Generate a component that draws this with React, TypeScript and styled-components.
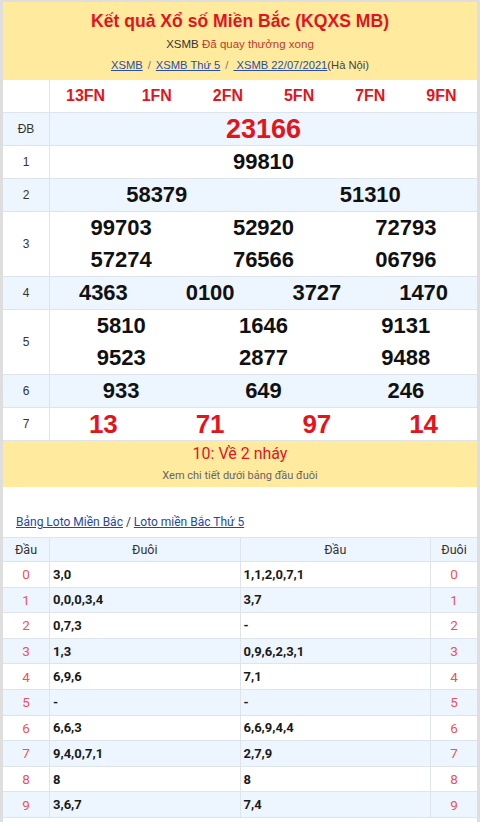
import React from "react";
import styled, { createGlobalStyle } from "styled-components";

const Global = createGlobalStyle`
  html, body { margin: 0; padding: 0; background: #fff; }
  body { font-family: "Liberation Sans", Arial, sans-serif; }
  * { box-sizing: border-box; }
`;

const Frame = styled.div`
  width: 480px;
  min-height: 822px;
  border-top: 2px solid #dedede;
  border-left: 3px solid #dedede;
  border-right: 3px solid #dedede;
  background: #fff;
`;

const Header = styled.div`
  background: #ffea9e;
  text-align: center;
  padding: 6px 0 5px;
`;

const Title = styled.h1`
  margin: 0;
  font-family: "Liberation Sans", Arial, sans-serif;
  font-weight: 700;
  font-size: 17.6px;
  line-height: 26px;
  color: #e4141c;
`;

const Sub = styled.div`
  font-size: 11.5px;
  line-height: 20px;
  color: #333;
`;

const SubRed = styled.span`
  color: #c0392b;
`;

const Crumbs = styled.div`
  margin-top: 1px;
  font-size: 11.2px;
  line-height: 20px;
  color: #444;
`;

const CrumbLink = styled.a`
  color: #2b4ea6;
  text-decoration: underline;
`;

const Sep = styled.span`
  color: #777;
  margin: 0 5px;
`;

const Row = styled.div<{ $alt?: boolean; $h: number }>`
  display: flex;
  height: ${(p) => p.$h}px;
  background: ${(p) => (p.$alt ? "#edf5fe" : "#fff")};
  border-bottom: 1px solid #dfe4ea;
`;

const Label = styled.div`
  width: 47px;
  flex: none;
  border-right: 1px solid #dfe4ea;
  display: flex;
  align-items: center;
  justify-content: center;
  font-size: 12px;
  color: #333;
`;

const Cells = styled.div<{ $cols: number }>`
  flex: 1;
  display: grid;
  grid-template-columns: repeat(${(p) => p.$cols}, 1fr);
  align-content: center;
`;

const Num = styled.div<{ $red?: boolean; $size?: number; $lh?: number }>`
  text-align: center;
  font-family: "Liberation Sans", Arial, sans-serif;
  font-weight: 700;
  font-size: ${(p) => p.$size ?? 22}px;
  line-height: ${(p) => p.$lh ?? 32}px;
  color: ${(p) => (p.$red ? "#e4141c" : "#111")};
`;

const Notice = styled.div`
  background: #ffea9e;
  text-align: center;
  padding: 1px 0 1px;
  font-family: Roboto, "Liberation Sans", sans-serif;
`;

const NoticeMain = styled.div`
  font-size: 16px;
  line-height: 24px;
  color: #e4141c;
`;

const NoticeSub = styled.div`
  font-size: 11px;
  line-height: 20px;
  color: #666;
`;

const LotoSection = styled.div`
  padding-top: 26px;
  font-family: Roboto, "Liberation Sans", sans-serif;
`;

const LotoLinks = styled.div`
  padding-left: 13px;
  font-size: 12px;
  line-height: 18px;
  margin-bottom: 6px;
  color: #333;
`;

const LotoLink = styled.a`
  color: #2446a8;
  text-decoration: underline;
`;

const LotoGrid = styled.div`
  display: grid;
  grid-template-columns: 47px 1fr 1fr 46px;
  border-top: 1px solid #dfe4ea;
`;

const LCell = styled.div<{ $alt?: boolean; $head?: boolean; $kind: "key" | "val" }>`
  height: ${(p) => (p.$head ? 24 : 25.6)}px;
  display: flex;
  align-items: center;
  justify-content: ${(p) => (p.$kind === "key" || p.$head ? "center" : "flex-start")};
  padding-left: ${(p) => (p.$kind === "val" && !p.$head ? 3 : 0)}px;
  background: ${(p) => (p.$alt ? "#edf5fe" : "#fff")};
  border-bottom: 1px solid #dfe4ea;
  border-right: 1px solid #dfe4ea;
  &:nth-child(4n) { border-right: none; }
  font-size: ${(p) => (p.$head ? 12.5 : p.$kind === "key" ? 13.5 : 13)}px;
  font-weight: ${(p) => (p.$kind === "val" && !p.$head ? 700 : 400)};
  color: ${(p) => (p.$head ? "#333" : p.$kind === "key" ? "#f0505a" : "#1a1a1a")};
`;

type Prize = { label: string; cols: number; nums: string[]; red?: boolean; size?: number; lines?: number };

const prizes: Prize[] = [
  { label: "ĐB", cols: 1, nums: ["23166"], red: true, size: 27 },
  { label: "1", cols: 1, nums: ["99810"] },
  { label: "2", cols: 2, nums: ["58379", "51310"] },
  { label: "3", cols: 3, nums: ["99703", "52920", "72793", "57274", "76566", "06796"], lines: 2 },
  { label: "4", cols: 4, nums: ["4363", "0100", "3727", "1470"] },
  { label: "5", cols: 3, nums: ["5810", "1646", "9131", "9523", "2877", "9488"], lines: 2 },
  { label: "6", cols: 3, nums: ["933", "649", "246"] },
  { label: "7", cols: 4, nums: ["13", "71", "97", "14"], red: true, size: 26 },
];

const fns = ["13FN", "1FN", "2FN", "5FN", "7FN", "9FN"];

const loto: [string, string, string][] = [
  ["0", "3,0", "1,1,2,0,7,1"],
  ["1", "0,0,0,3,4", "3,7"],
  ["2", "0,7,3", "-"],
  ["3", "1,3", "0,9,6,2,3,1"],
  ["4", "6,9,6", "7,1"],
  ["5", "-", "-"],
  ["6", "6,6,3", "6,6,9,4,4"],
  ["7", "9,4,0,7,1", "2,7,9"],
  ["8", "8", "8"],
  ["9", "3,6,7", "7,4"],
];

export default function App() {
  return (
    <>
      <Global />
      <Frame>
        <Header>
          <Title>Kết quả Xổ số Miền Bắc (KQXS MB)</Title>
          <Sub>
            XSMB <SubRed>Đã quay thưởng xong</SubRed>
          </Sub>
          <Crumbs>
            <CrumbLink href="#">XSMB</CrumbLink>
            <Sep>/</Sep>
            <CrumbLink href="#">XSMB Thứ 5</CrumbLink>
            <Sep>/</Sep>
            <CrumbLink href="#">&nbsp;XSMB 22/07/2021</CrumbLink>(Hà Nội)
          </Crumbs>
        </Header>

        <Row $h={33}>
          <Label />
          <Cells $cols={6}>
            {fns.map((f) => (
              <Num key={f} $red $size={16}>
                {f}
              </Num>
            ))}
          </Cells>
        </Row>

        {prizes.map((p, i) => (
          <Row key={p.label} $alt={i % 2 === 0} $h={p.lines === 2 ? 65 : 33}>
            <Label>{p.label}</Label>
            <Cells $cols={p.cols}>
              {p.nums.map((n, j) => (
                <Num key={j} $red={p.red} $size={p.size}>
                  {n}
                </Num>
              ))}
            </Cells>
          </Row>
        ))}

        <Notice>
          <NoticeMain>10: Về 2 nháy</NoticeMain>
          <NoticeSub>Xem chi tiết dưới bảng đầu đuôi</NoticeSub>
        </Notice>

        <LotoSection>
          <LotoLinks>
            <LotoLink href="#">Bảng Loto Miền Bắc</LotoLink> /{" "}
            <LotoLink href="#">Loto miền Bắc Thứ 5</LotoLink>
          </LotoLinks>
          <LotoGrid>
            <LCell $head $alt $kind="key">Đầu</LCell>
            <LCell $head $alt $kind="val">Đuôi</LCell>
            <LCell $head $alt $kind="val">Đầu</LCell>
            <LCell $head $alt $kind="key">Đuôi</LCell>
            {loto.map(([k, a, b], i) => (
              <React.Fragment key={k}>
                <LCell $alt={i % 2 === 1} $kind="key">{k}</LCell>
                <LCell $alt={i % 2 === 1} $kind="val">{a}</LCell>
                <LCell $alt={i % 2 === 1} $kind="val">{b}</LCell>
                <LCell $alt={i % 2 === 1} $kind="key">{k}</LCell>
              </React.Fragment>
            ))}
          </LotoGrid>
        </LotoSection>
      </Frame>
    </>
  );
}
